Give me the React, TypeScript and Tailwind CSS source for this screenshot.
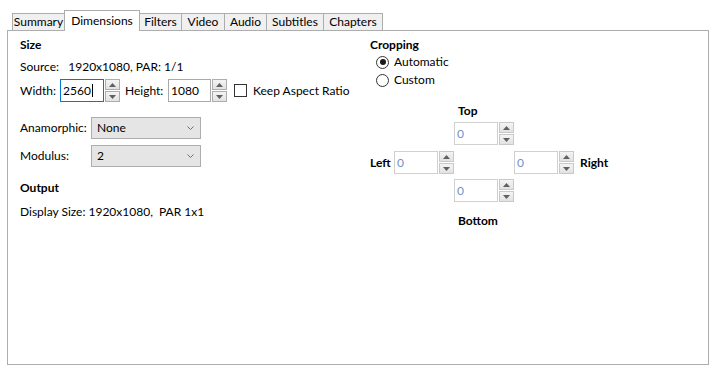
import React from "react";

const font = { fontFamily: '"Lato", "Liberation Sans", sans-serif' };

function Spinner({ muted }: { muted?: boolean }) {
  const btn =
    "flex h-[11px] w-[15px] items-center justify-center border bg-gradient-to-b from-[#f4f4f4] to-[#e2e2e2] " +
    (muted ? "border-[#c9c9c9]" : "border-[#adadad]");
  return (
    <div className="ml-px flex h-[23px] flex-col justify-between">
      <div className={btn}>
        <svg width="7" height="4" viewBox="0 0 7 4">
          <path d="M0 4 L3.5 0 L7 4 Z" fill="#606060" />
        </svg>
      </div>
      <div className={btn}>
        <svg width="7" height="4" viewBox="0 0 7 4">
          <path d="M0 0 L3.5 4 L7 0 Z" fill="#606060" />
        </svg>
      </div>
    </div>
  );
}

function SpinBox({
  value,
  width = 44,
  focused,
  muted,
}: {
  value: string;
  width?: number;
  focused?: boolean;
  muted?: boolean;
}) {
  const border = focused
    ? "border-[#0078d7]"
    : muted
      ? "border-[#d0d0d0]"
      : "border-[#a9a9a9]";
  return (
    <div className="flex items-center">
      <div
        className={`flex h-[23px] items-center border bg-white pl-[2px] text-[12px] ${border} ${muted ? "text-[#6f93c8]" : "text-black"}`}
        style={{ width }}
      >
        {value}
        {focused && <span className="ml-px inline-block h-[13px] w-px bg-black" />}
      </div>
      <Spinner muted={muted} />
    </div>
  );
}

function Combo({ value }: { value: string }) {
  return (
    <div className="flex h-[22px] w-[110px] items-center justify-between border border-[#adadad] bg-[#e5e5e5] pl-[5px] pr-[6px]">
      <span>{value}</span>
      <svg width="7" height="4" viewBox="0 0 7 4">
        <path d="M0.5 0.5 L3.5 3.5 L6.5 0.5" stroke="#707070" fill="none" strokeWidth="1" />
      </svg>
    </div>
  );
}

function Radio({ checked, label }: { checked?: boolean; label: string }) {
  return (
    <div className="flex h-4 items-center">
      <div className="ml-[6px] flex h-[13px] w-[13px] items-center justify-center rounded-full border border-[#333]">
        {checked && <div className="h-[6px] w-[6px] rounded-full bg-[#1a1a1a]" />}
      </div>
      <span className="ml-[5px]">{label}</span>
    </div>
  );
}

const tabs = [
  { name: "Summary", w: 53 },
  { name: "Dimensions", w: 76, active: true },
  { name: "Filters", w: 43 },
  { name: "Video", w: 44 },
  { name: "Audio", w: 43 },
  { name: "Subtitles", w: 58 },
  { name: "Chapters", w: 60 },
];

export default function App() {
  return (
    <div className="h-[371px] w-[712px] bg-white text-[12px] text-black" style={font}>
      <div className="flex items-end pl-[12px] pt-[10px]">
        {tabs.map((t, i) =>
          t.active ? (
            <div
              key={t.name}
              className="relative z-10 -mb-px -ml-px flex h-[21px] items-start justify-center border border-b-0 border-[#adadad] bg-white pt-[1px]"
              style={{ width: t.w }}
            >
              {t.name}
            </div>
          ) : (
            <div
              key={t.name}
              className={`flex h-[17px] items-center justify-center border border-b-0 border-[#adadad] bg-[#f0f0f0] ${i > 0 ? "-ml-px" : ""}`}
              style={{ width: t.w }}
            >
              {t.name}
            </div>
          ),
        )}
      </div>
      <div className="ml-[7px] flex h-[335px] w-[702px] border border-[#adadad] pl-[12px] pt-[6px]">
        <div className="flex w-[350px] flex-col">
          <div className="h-4 font-bold leading-4">Size</div>
          <div className="mt-[6px] h-4 leading-4">
            Source:&nbsp;&nbsp; 1920x1080, PAR: 1/1
          </div>
          <div className="mt-[4px] flex items-center">
            <span className="w-[40px]">Width:</span>
            <SpinBox value="2560" focused />
            <span className="ml-[5px] w-[43px]">Height:</span>
            <SpinBox value="1080" width={43} />
            <div className="ml-[7px] h-[13px] w-[13px] border border-[#333] bg-white" />
            <span className="ml-[6px]">Keep Aspect Ratio</span>
          </div>
          <div className="mt-[15px] flex items-center">
            <span className="w-[71px]">Anamorphic:</span>
            <Combo value="None" />
          </div>
          <div className="mt-[6px] flex items-center">
            <span className="w-[71px]">Modulus:</span>
            <Combo value="2" />
          </div>
          <div className="mt-[13px] h-4 font-bold leading-4">Output</div>
          <div className="mt-[8px] h-4 leading-4">
            Display Size: 1920x1080,&nbsp; PAR 1x1
          </div>
        </div>
        <div className="flex flex-col">
          <div className="h-4 font-bold leading-4">Cropping</div>
          <div className="mt-[1px]">
            <Radio checked label="Automatic" />
          </div>
          <div className="mt-[2px]">
            <Radio label="Custom" />
          </div>
          <div className="ml-[88px] mt-[15px] h-4 font-bold leading-4">Top</div>
          <div className="ml-[84px] mt-[3px]">
            <SpinBox value="0" muted />
          </div>
          <div className="mt-[6px] flex items-center">
            <span className="w-[24px] font-bold">Left</span>
            <SpinBox value="0" muted />
            <div className="w-[60px]" />
            <SpinBox value="0" muted />
            <span className="ml-[6px] font-bold">Right</span>
          </div>
          <div className="ml-[84px] mt-[5px]">
            <SpinBox value="0" muted />
          </div>
          <div className="ml-[88px] mt-[11px] h-4 font-bold leading-4">Bottom</div>
        </div>
      </div>
    </div>
  );
}
